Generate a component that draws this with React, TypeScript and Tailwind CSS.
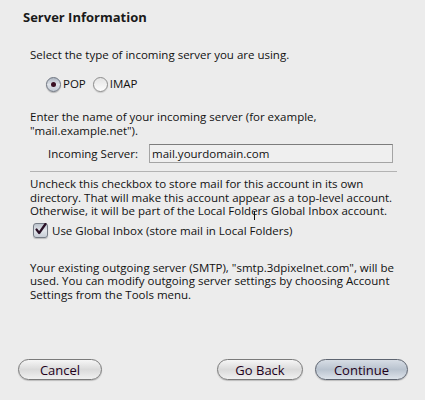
import React, { useState } from 'react';

const font = { fontFamily: '"Open Sans", "DejaVu Sans", sans-serif' };

const Radio: React.FC<{ checked: boolean; label: string; onClick: () => void }> = ({ checked, label, onClick }) => (
  <button type="button" onClick={onClick} className="flex items-center gap-[2px] text-[11.5px] text-[#111]">
    <span
      className={
        checked
          ? 'flex h-[15px] w-[15px] items-center justify-center rounded-full border border-[#6d7480] bg-gradient-to-b from-[#aeb6c2] via-[#dfe3e9] to-[#c3cad4] shadow-[0_1px_1px_rgba(0,0,0,0.25)]'
          : 'flex h-[15px] w-[15px] items-center justify-center rounded-full border border-[#8c8c8c] bg-gradient-to-b from-[#e4e4e4] to-[#fdfdfd] shadow-[0_1px_1px_rgba(0,0,0,0.15)]'
      }
    >
      {checked && <span className="h-[5px] w-[5px] rounded-full bg-[#3a0f22]" />}
    </span>
    <span className="leading-[14px]">{label}</span>
  </button>
);

const PillButton: React.FC<{ label: string; primary?: boolean; width: string }> = ({ label, primary, width }) => (
  <button
    type="button"
    className={
      (primary
        ? 'border-[#5d6470] bg-gradient-to-b from-[#d7dde5] via-[#b9c3cf] to-[#dde3ea] '
        : 'border-[#7a7a7a] bg-gradient-to-b from-[#f6f6f6] via-[#dadada] to-[#f0f0f0] ') +
      width +
      ' flex h-[21px] items-center justify-center rounded-full border text-[13px] leading-[16px] text-[#22001a] shadow-[0_1px_1px_rgba(0,0,0,0.2)]'
    }
  >
    {label}
  </button>
);

export default function App() {
  const [serverType, setServerType] = useState<'pop' | 'imap'>('pop');
  const [globalInbox, setGlobalInbox] = useState(true);
  const [server, setServer] = useState('mail.yourdomain.com');

  return (
    <div style={font} className="relative flex h-[400px] w-[425px] flex-col overflow-hidden bg-[#ececec] text-[#111]">
      {/* Title */}
      <h1 className="pl-[23px] pt-[9px] text-[13px] font-bold leading-[16px] text-[#1a1a1a]">Server Information</h1>

      <div className="flex flex-col pl-[30px] pr-[20px] text-[11.5px]">
        <p className="mt-[23px] leading-[14px]">Select the type of incoming server you are using.</p>

        <div className="mt-[14px] flex h-[16px] items-center gap-[7px] pl-[16px]">
          <Radio checked={serverType === 'pop'} label="POP" onClick={() => setServerType('pop')} />
          <Radio checked={serverType === 'imap'} label="IMAP" onClick={() => setServerType('imap')} />
        </div>

        <p className="mt-[18px] leading-[14px]">
          Enter the name of your incoming server (for example,
          <br />
          "mail.example.net").
        </p>

        <div className="mt-[6px] flex h-[19px] items-center">
          <label className="w-[119px] pr-[11px] text-right">Incoming Server:</label>
          <input
            value={server}
            onChange={(e) => setServer(e.target.value)}
            className="h-[19px] w-[244px] border border-[#a4a4a4] border-t-[#7c7c7c] bg-[#efefef] px-[2px] text-[11.5px] text-[#111] outline-none"
            style={font}
          />
        </div>

        <div className="mt-[8px] h-px w-[367px] bg-[#b3b3b3]" />

        <p className="mt-[5px] leading-[13.5px]">
          Uncheck this checkbox to store mail for this account in its own directory. That will make this account appear
          as a top-level account. Otherwise, it will be part of the Local Folders Global Inbox account.
        </p>

        <button
          type="button"
          onClick={() => setGlobalInbox(!globalInbox)}
          className="mt-[5px] flex h-[16px] items-center gap-[4px] pl-[3px] text-left"
        >
          <span className="flex h-[15px] w-[15px] items-center justify-center rounded-[3px] border border-[#767c86] bg-gradient-to-b from-[#bcc3cc] via-[#e2e5ea] to-[#c8ced6] shadow-[0_1px_1px_rgba(0,0,0,0.2)]">
            {globalInbox && (
              <svg width="13" height="13" viewBox="0 0 13 13" className="-mt-[3px]">
                <path d="M2.5 6.5 L5.2 10 L11.5 1" fill="none" stroke="#2a1025" strokeWidth="2.2" strokeLinecap="round" strokeLinejoin="round" />
              </svg>
            )}
          </span>
          <span className="leading-[14px]">Use Global Inbox (store mail in Local Folders)</span>
        </button>

        <p className="mt-[22px] leading-[13.5px]">
          Your existing outgoing server (SMTP), "smtp.3dpixelnet.com", will be used. You can modify outgoing server
          settings by choosing Account Settings from the Tools menu.
        </p>
      </div>

      {/* text cursor */}
      <div className="absolute left-[254px] top-[211px] h-[9px] w-px bg-[#111]" />

      <div className="mt-auto flex items-center pb-[20px] pl-[18px] pr-[17px]">
        <PillButton label="Cancel" width="w-[84px]" />
        <div className="ml-auto flex gap-[12px]">
          <PillButton label="Go Back" width="w-[86px]" />
          <PillButton label="Continue" width="w-[93px]" primary />
        </div>
      </div>
    </div>
  );
}
